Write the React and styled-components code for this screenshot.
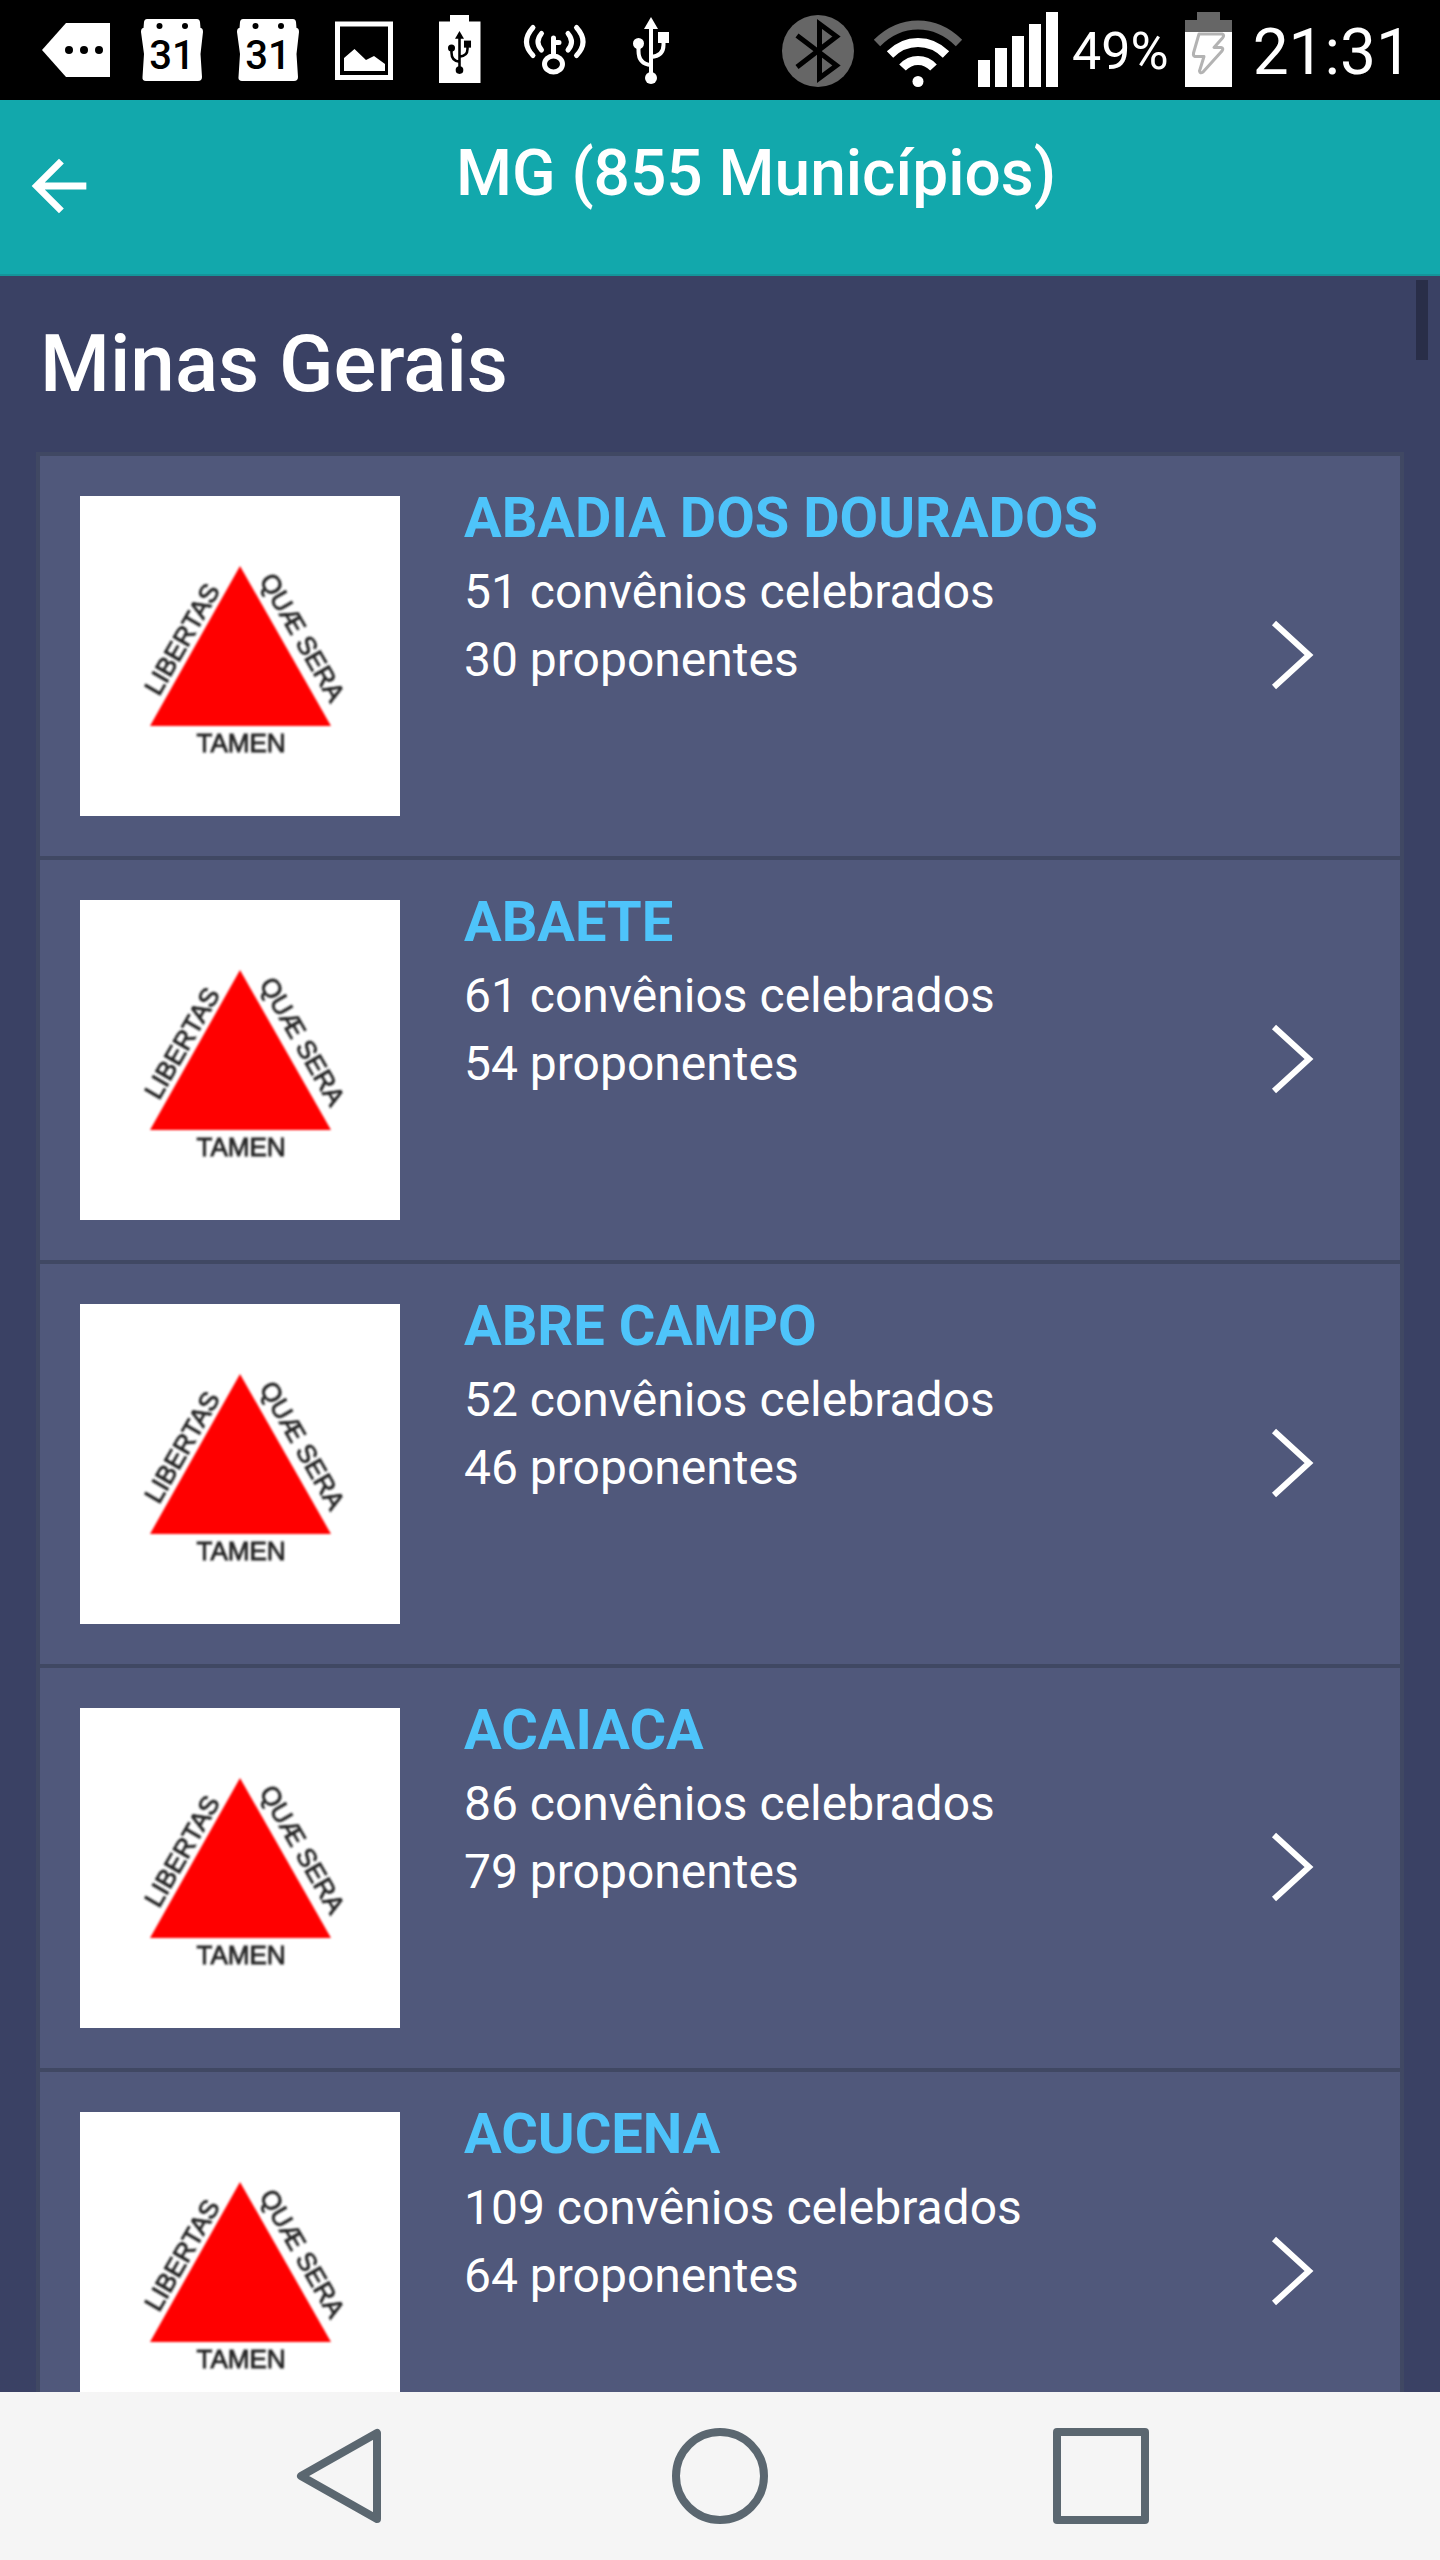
import React from "react";
import styled, { createGlobalStyle } from "styled-components";

const GlobalStyle = createGlobalStyle`
  *, *::before, *::after { box-sizing: border-box; }
  body { margin: 0; background: #3a4164; }
  h1, h2, h3, p, ul { margin: 0; padding: 0; }
`;

const Screen = styled.div`
  display: flex;
  flex-direction: column;
  height: 100vh;
  overflow: hidden;
  color: #fff;
  font-family: Roboto, "Noto Sans", sans-serif;
`;

const StatusBar = styled.div`
  display: flex;
  flex: none;
  align-items: center;
  justify-content: space-between;
  height: 100px;
  padding: 0 28px;
  background: #000;
`;

const StatusGroup = styled.div`
  display: flex;
  align-items: center;
`;

const StatusIcon = styled.svg`
  display: block;
  flex: none;
  width: ${(p) => p.$width || 96}px;
  height: 100px;
`;

const BatteryLevel = styled.span`
  padding: 4px 8px 0 6px;
  font-size: 52px;
  line-height: 64px;
`;

const Clock = styled.time`
  padding: 6px 0 0 12px;
  font-size: 64px;
  line-height: 80px;
`;

const Header = styled.header`
  display: flex;
  flex: none;
  align-items: flex-start;
  height: 176px;
  padding: 0 48px 0 16px;
  background: #12a8ac;
  border-bottom: 2px solid #14959a;
`;

const BackButton = styled.button`
  display: flex;
  flex: none;
  align-items: center;
  width: 104px;
  height: 172px;
  padding: 0 2px;
  border: 0;
  background: none;
  color: inherit;
`;

const HeaderTitle = styled.h1`
  flex: 1;
  font-size: 64px;
  font-weight: 500;
  line-height: 148px;
  text-align: center;
  white-space: nowrap;
`;

const ContentFrame = styled.main`
  position: relative;
  flex: 1;
  min-height: 0;
`;

const Content = styled.div`
  height: 100%;
  overflow-y: auto;
  padding: 0 36px;
  scrollbar-width: none;
`;

const ScrollThumb = styled.div`
  position: absolute;
  top: 4px;
  right: 12px;
  width: 12px;
  height: 80px;
  background: #292e48;
`;

const StateName = styled.h2`
  padding: 0 4px;
  font-size: 80px;
  font-weight: 500;
  line-height: 176px;
`;

const CityList = styled.ul`
  list-style: none;
  border: 4px solid #404863;
`;

const CityItem = styled.li`
  & + & { border-top: 4px solid #404863; }
`;

const CityLink = styled.a`
  display: flex;
  height: 400px;
  padding: 0 84px 0 40px;
  background: #50587b;
  color: inherit;
  text-decoration: none;
`;

const Flag = styled.svg`
  display: block;
  flex: none;
  align-self: center;
  width: 320px;
  height: 320px;
  background: #fff;
  font-family: "Liberation Sans", sans-serif;
`;

const CityText = styled.div`
  flex: 1;
  padding: 28px 0 0 64px;
`;

const CityName = styled.h3`
  margin-bottom: 6px;
  color: #4ec4fa;
  font-size: 56px;
  font-weight: 700;
  line-height: 68px;
`;

const CityLine = styled.p`
  font-size: 48px;
  line-height: 68px;
`;

const Chevron = styled.svg`
  flex: none;
  align-self: center;
  width: 48px;
  height: 72px;
`;

const NavBar = styled.nav`
  display: flex;
  flex: none;
  align-items: center;
  justify-content: center;
  height: 168px;
  background: #f5f5f5;
`;

const NavButton = styled.button`
  display: flex;
  align-items: center;
  justify-content: center;
  width: 381px;
  height: 168px;
  padding: 0;
  border: 0;
  background: none;
  color: #5b6770;
`;

const cities = [
  { name: "ABADIA DOS DOURADOS", agreements: 51, proponents: 30 },
  { name: "ABAETE", agreements: 61, proponents: 54 },
  { name: "ABRE CAMPO", agreements: 52, proponents: 46 },
  { name: "ACAIACA", agreements: 86, proponents: 79 },
  { name: "ACUCENA", agreements: 109, proponents: 64 },
];

function MessageIcon() {
  return (
    <StatusIcon viewBox="0 0 96 100" aria-hidden="true">
      <path d="M14 50L38 23H82V77H38Z" fill="#fff" />
      <circle cx="41" cy="50" r="4" />
      <circle cx="56" cy="50" r="4" />
      <circle cx="71" cy="50" r="4" />
    </StatusIcon>
  );
}

function CalendarIcon() {
  return (
    <StatusIcon viewBox="0 0 96 100" aria-hidden="true">
      <path
        d="M23 19H73Q75.500 19 76 22L76.500 28Q79 28 79 32L76.500 54L78 77Q78 81 74 81H22Q18 81 18.500 77L20 54L17 32Q17 28 19.500 28L20 22Q20.500 19 23 19Z"
        fill="#fff"
      />
      <circle cx="35.500" cy="26" r="3" />
      <circle cx="61" cy="26" r="3" />
      <text x="48" y="69" textAnchor="middle" fontSize="40" fontWeight="500">31</text>
    </StatusIcon>
  );
}

function PictureIcon() {
  return (
    <StatusIcon viewBox="0 0 96 100" aria-hidden="true">
      <rect x="21.500" y="24" width="53" height="53.500" fill="none" stroke="#fff" strokeWidth="5" />
      <path d="M28 58L38.500 49L50 60L58 56L69 64V71H28Z" fill="#fff" />
    </StatusIcon>
  );
}

function UsbShape() {
  return (
    <g>
      <path d="M0 6V62M-12.500 24V34Q-12.500 47 0 48M12.500 20V28Q12.500 39 0 40" fill="none" stroke="currentColor" strokeWidth="4" />
      <path d="M0 0L7 12H-7Z" fill="currentColor" />
      <circle cx="-12.500" cy="26.500" r="5.500" fill="currentColor" />
      <circle cx="0" cy="61" r="6" fill="currentColor" />
      <rect x="7" y="15" width="11" height="11" fill="currentColor" />
    </g>
  );
}

function UsbBatteryIcon() {
  return (
    <StatusIcon viewBox="0 0 96 100" aria-hidden="true">
      <path d="M38 15H57V21.500H68.500V83H27V21.500H38Z" fill="#fff" />
      <g transform="translate(47.500 31) scale(0.640)" color="#000">
        <UsbShape />
      </g>
    </StatusIcon>
  );
}

function KeyIcon() {
  return (
    <StatusIcon viewBox="0 0 96 100" aria-hidden="true">
      <g fill="none" stroke="#fff" strokeWidth="5" strokeLinecap="round">
        <ellipse cx="45.500" cy="64" rx="9" ry="8" />
        <path d="M45.500 55V38M46 42.500H51" />
        <path d="M25 27.500Q12 42 25 55.500M33.500 33.500Q26.500 42 33.500 50" />
        <path d="M68.500 27.500Q81.500 42 68.500 55.500M60 33.500Q67 42 60 50" />
      </g>
    </StatusIcon>
  );
}

function UsbIcon() {
  return (
    <StatusIcon viewBox="0 0 96 100" color="#fff" aria-hidden="true">
      <g transform="translate(47 17)">
        <UsbShape />
      </g>
    </StatusIcon>
  );
}

function BluetoothIcon() {
  return (
    <StatusIcon viewBox="0 0 96 100" aria-hidden="true">
      <circle cx="48" cy="51" r="36" fill="#666" />
      <path d="M27 35.500L66.500 65.500L49.500 78V24L66.500 36.500L27 67" fill="none" stroke="#000" strokeWidth="5" />
    </StatusIcon>
  );
}

function WifiIcon() {
  return (
    <StatusIcon $width={104} viewBox="0 0 104 100" aria-hidden="true">
      <g fill="none" stroke="#fff" strokeWidth="9">
        <path d="M11 43Q29 25 52 25T93 43" stroke="#666" />
        <path d="M24 54.500Q36 42.500 52 42.500T80 54.500" />
        <path d="M36.500 67.500Q43 60.500 52 60.500T67.500 67.500" />
      </g>
      <circle cx="52" cy="81.500" r="5.500" fill="#fff" />
    </StatusIcon>
  );
}

function SignalIcon() {
  return (
    <StatusIcon viewBox="0 0 96 100" fill="#fff" aria-hidden="true">
      {[60, 48, 36, 24, 12].map((top, i) => (
        <rect key={top} x={8 + i * 17} y={top} width="12" height={87 - top} />
      ))}
    </StatusIcon>
  );
}

function BatteryIcon() {
  return (
    <StatusIcon $width={64} viewBox="0 0 64 100" aria-hidden="true">
      <path d="M20 12H43V20H55V32H8V20H20Z" fill="#666" />
      <rect x="8" y="32" width="47" height="55" fill="#fff" />
      <path
        d="M22 34H45Q48 35 45.500 38L37 47.500H44Q47 48 45 51L26 72Q23 74 22.500 71L27 56.500H18Q16 56 16.500 53Z"
        fill="none"
        stroke="#b3b3b3"
        strokeWidth="3"
        strokeLinejoin="round"
      />
    </StatusIcon>
  );
}

function MinasFlag() {
  return (
    <Flag viewBox="0 0 320 320" role="img" aria-label="Minas Gerais">
      <defs>
        <filter id="soft">
          <feGaussianBlur stdDeviation="1.200" />
        </filter>
      </defs>
      <g filter="url(#soft)">
        <path d="M160 70L251 230H70Z" fill="#f00" />
        <g fill="#222" stroke="#222" strokeWidth="0.800" fontSize="26">
          <text transform="translate(79 201) rotate(-60)">LIBERTAS</text>
          <text transform="translate(179 84) rotate(60)">QUÆ SERA</text>
          <text x="161" y="256" textAnchor="middle">TAMEN</text>
        </g>
      </g>
    </Flag>
  );
}

function City({ name, agreements, proponents }) {
  return (
    <CityItem>
      <CityLink href="#">
        <MinasFlag />
        <CityText>
          <CityName>{name}</CityName>
          <CityLine>{agreements} convênios celebrados</CityLine>
          <CityLine>{proponents} proponentes</CityLine>
        </CityText>
        <Chevron viewBox="0 0 48 72" aria-hidden="true">
          <path d="M6 3L41 35L6 67" fill="none" stroke="#fff" strokeWidth="6" />
        </Chevron>
      </CityLink>
    </CityItem>
  );
}

export default function App() {
  return (
    <Screen>
      <GlobalStyle />
      <StatusBar>
        <StatusGroup>
          <MessageIcon />
          <CalendarIcon />
          <CalendarIcon />
          <PictureIcon />
          <UsbBatteryIcon />
          <KeyIcon />
          <UsbIcon />
        </StatusGroup>
        <StatusGroup>
          <BluetoothIcon />
          <WifiIcon />
          <SignalIcon />
          <BatteryLevel>49%</BatteryLevel>
          <BatteryIcon />
          <Clock>21:31</Clock>
        </StatusGroup>
      </StatusBar>
      <Header>
        <BackButton type="button" aria-label="Voltar">
          <svg width="82" height="82" viewBox="0 0 24 24" fill="currentColor" aria-hidden="true">
            <path d="M20 11H7.830l5.590-5.590L12 4l-8 8 8 8 1.410-1.410L7.830 13H20v-2z" />
          </svg>
        </BackButton>
        <HeaderTitle>MG (855 Municípios)</HeaderTitle>
      </Header>
      <ContentFrame>
        <Content>
          <StateName>Minas Gerais</StateName>
          <CityList>
            {cities.map((city) => (
              <City key={city.name} {...city} />
            ))}
          </CityList>
        </Content>
        <ScrollThumb />
      </ContentFrame>
      <NavBar>
        <NavButton type="button" aria-label="Voltar">
          <svg width="96" height="96" viewBox="0 0 96 96" fill="none" stroke="currentColor" strokeWidth="8" strokeLinejoin="round" aria-hidden="true">
            <path d="M86 5V91L10 48Z" />
          </svg>
        </NavButton>
        <NavButton type="button" aria-label="Início">
          <svg width="96" height="96" viewBox="0 0 96 96" fill="none" stroke="currentColor" strokeWidth="8" aria-hidden="true">
            <circle cx="48" cy="48" r="44" />
          </svg>
        </NavButton>
        <NavButton type="button" aria-label="Recentes">
          <svg width="96" height="96" viewBox="0 0 96 96" fill="none" stroke="currentColor" strokeWidth="8" strokeLinejoin="round" aria-hidden="true">
            <rect x="4" y="4" width="88" height="88" />
          </svg>
        </NavButton>
      </NavBar>
    </Screen>
  );
}
